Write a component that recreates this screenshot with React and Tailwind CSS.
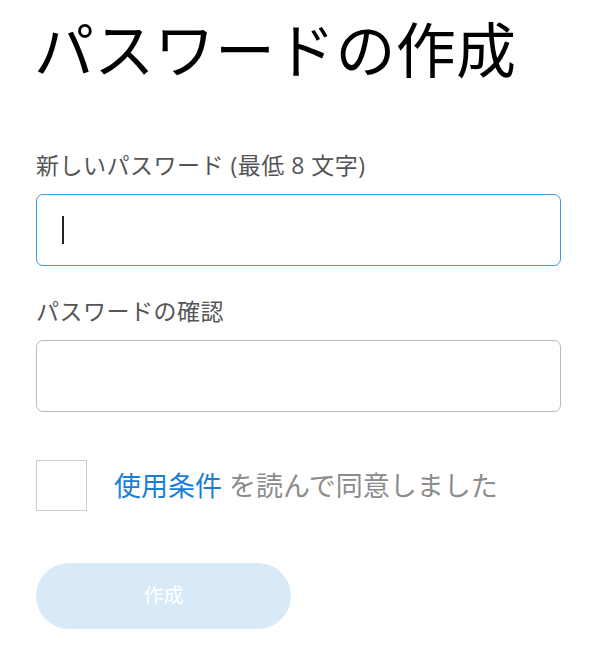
import React from "react";

export default function App() {
  return (
    <div
      className="w-[604px] h-[647px] bg-white overflow-hidden"
      style={{ fontFamily: '"Open Sans", "Noto Sans CJK JP", sans-serif' }}
    >
      <div className="pl-[36px] pr-[43px] pt-[20px] flex flex-col">
        <h1 className="text-[60px] leading-[60px] text-black font-normal -ml-[2px] tracking-[0.3px]">
          パスワードの作成
        </h1>
        <label className="mt-[70px] text-[23px] leading-[30px] text-[#555] tracking-[0.5px]">
          新しいパスワード (最低 8 文字)
        </label>
        <div className="mt-[14px] h-[72px] rounded-[7px] border border-[#3a99dd] flex items-center pl-[25px]">
          <div className="w-[2px] h-[28px] bg-[#222]" />
        </div>
        <label className="mt-[30px] text-[23px] leading-[30px] text-[#555] tracking-[0.5px]">
          パスワードの確認
        </label>
        <div className="mt-[14px] h-[72px] rounded-[7px] border border-[#bbbbbb]" />
        <div className="mt-[48px] flex items-center">
          <div className="w-[51px] h-[51px] border border-[#cccccc] shrink-0" />
          <div className="ml-[27px] text-[27px] leading-[36px] text-[#8c8c8c] whitespace-nowrap">
            <span className="text-[#1a7fd4]">使用条件</span> を読んで同意しました
          </div>
        </div>
        <button className="mt-[52px] w-[255px] h-[66px] rounded-full bg-[#d8eaf8] text-white text-[20px] leading-[28px]">
          作成
        </button>
      </div>
    </div>
  );
}
